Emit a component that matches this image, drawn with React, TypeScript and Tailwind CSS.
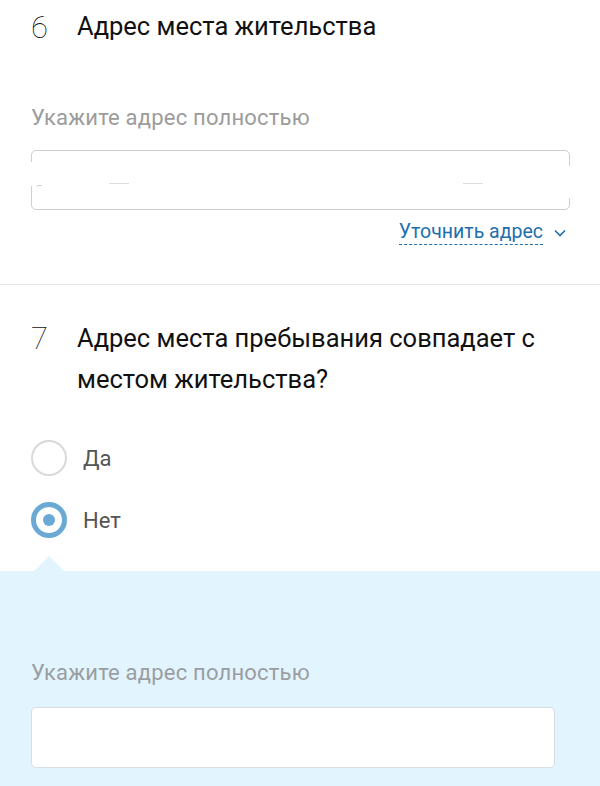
import React from "react";

function Radio({ checked, label }: { checked?: boolean; label: string }) {
  return (
    <div className="flex items-center h-[36px]">
      {checked ? (
        <div className="w-[36px] h-[36px] rounded-full border-[5px] border-[#6aa9d3] flex items-center justify-center">
          <div className="w-[12px] h-[12px] rounded-full bg-[#6aa9d3]" />
        </div>
      ) : (
        <div className="w-[36px] h-[36px] rounded-full border-2 border-[#d9d9d9]" />
      )}
      <span className="ml-[16px] text-[22px] text-[#555]">{label}</span>
    </div>
  );
}

export default function App() {
  return (
    <div className="w-[600px] h-[786px] overflow-hidden bg-white font-['Roboto',sans-serif]">
      {/* Question 6 */}
      <section className="px-[31px] pt-[10px] pb-[39px] border-b border-[#e6e6e6]">
        <div className="flex items-center h-[34px]">
          <span className="w-[46px] text-[31px] font-thin text-[#111] leading-none">6</span>
          <h2 className="text-[25.5px] text-[#111] leading-none">Адрес места жительства</h2>
        </div>

        <p className="mt-[62px] text-[22px] tracking-[0.2px] text-[#9c9c9c] leading-[24px]">Укажите адрес полностью</p>

        {/* address box */}
        <div className="relative mt-[20px] h-[60px] w-[539px] rounded-[5px] border border-[#cfcfcf]">
          <div className="absolute -left-[2px] top-[11px] h-[24px] w-[6px] bg-white" />
          <div className="absolute -right-[2px] top-[15px] h-[32px] w-[6px] bg-white" />
          <div className="absolute left-[4px] top-[34px] h-[3px] w-[6px] border-t border-[#cfcfcf] rounded-tl-[4px]" />
          <div className="absolute left-[77px] top-[32px] h-px w-[20px] bg-[#dcdcdc]" />
          <div className="absolute left-[431px] top-[32px] h-px w-[20px] bg-[#dcdcdc]" />
        </div>

        <div className="mt-[10px] flex justify-end items-center">
          <span className="text-[19.5px] text-[#1f6fad] leading-[24px] border-b border-dashed border-[#1f6fad]">
            Уточнить адрес
          </span>
          <svg width="12" height="8" viewBox="0 0 12 8" className="ml-[11px] mr-[3px]">
            <path d="M1 1.5 L6 6.5 L11 1.5" fill="none" stroke="#1f6fad" strokeWidth="1.6" />
          </svg>
        </div>
      </section>

      {/* Question 7 */}
      <section className="pt-[33px]">
        <div className="px-[31px] flex">
          <span className="w-[46px] text-[31px] font-thin text-[#111] leading-[41px]">7</span>
          <h2 className="text-[25.5px] text-[#111] leading-[41px] w-[480px]">
            Адрес места пребывания совпадает с местом жительства?
          </h2>
        </div>

        <div className="px-[31px] mt-[40px] flex flex-col gap-[26px]">
          <Radio label="Да" />
          <Radio checked label="Нет" />
        </div>

        <div className="relative mt-[33px] bg-[#e2f4fe] px-[31px] pt-[90px] pb-[18px]">
          <div className="absolute left-[34px] -top-[15px] w-0 h-0 border-l-[15px] border-r-[15px] border-b-[15px] border-l-transparent border-r-transparent border-b-[#e2f4fe]" />
          <p className="text-[22px] tracking-[0.2px] text-[#9a9ea2] leading-[24px]">Укажите адрес полностью</p>
          <div className="mt-[22px] h-[61px] w-[524px] rounded-[5px] border border-[#d8dee2] bg-white" />
        </div>
      </section>
    </div>
  );
}
